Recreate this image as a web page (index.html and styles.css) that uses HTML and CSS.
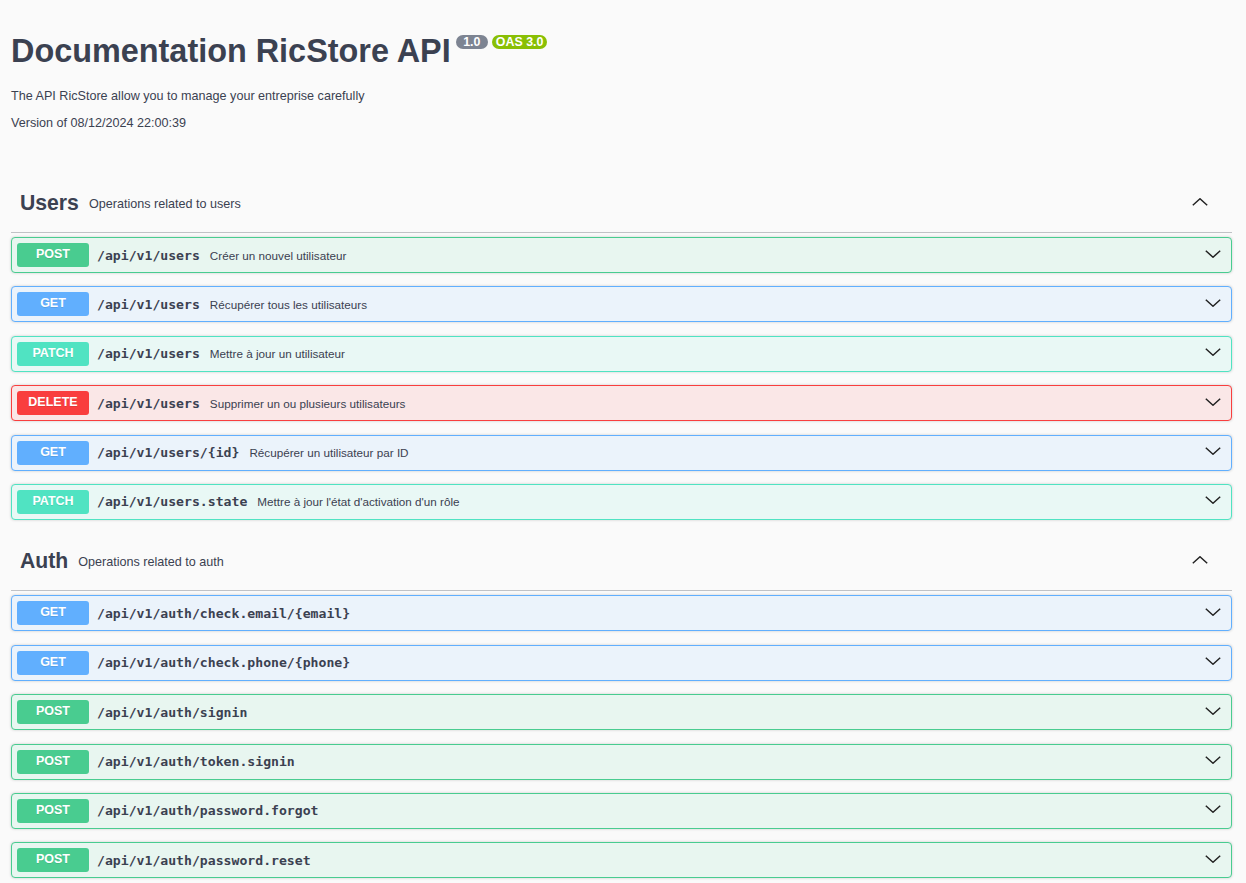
FILE: index.html
```html
<!DOCTYPE html>
<html lang="en">
<head>
<meta charset="utf-8">
<title>Documentation RicStore API</title>
<link rel="stylesheet" href="styles.css">
</head>
<body>
<div class="wrapper">
  <div class="info">
    <h2 class="title">Documentation RicStore API<span class="badge badge-ver"> 1.0 </span><span class="badge badge-oas">OAS 3.0</span></h2>
    <p class="info-text first">The API RicStore allow you to manage your entreprise carefully</p>
    <p class="info-text">Version of 08/12/2024 22:00:39</p>
  </div>

  <section class="tag-section">
    <div class="tag-header">
      <h3 class="tag-name">Users</h3>
      <span class="tag-desc">Operations related to users</span>
      <svg class="chev-up" width="16" height="8" viewBox="0 0 16 8"><polyline points="0.8,7.2 8,0.8 15.2,7.2" fill="none" stroke="#222" stroke-width="1.5"/></svg>
    </div>
    <div class="op op-post"><span class="method">POST</span><span class="path">/api/v1/users</span><span class="desc">Créer un nouvel utilisateur</span><svg class="chev" width="16" height="8" viewBox="0 0 16 8"><polyline points="0.8,0.8 8,7.2 15.2,0.8" fill="none" stroke="#222" stroke-width="1.5"/></svg></div>
    <div class="op op-get"><span class="method">GET</span><span class="path">/api/v1/users</span><span class="desc">Récupérer tous les utilisateurs</span><svg class="chev" width="16" height="8" viewBox="0 0 16 8"><polyline points="0.8,0.8 8,7.2 15.2,0.8" fill="none" stroke="#222" stroke-width="1.5"/></svg></div>
    <div class="op op-patch"><span class="method">PATCH</span><span class="path">/api/v1/users</span><span class="desc">Mettre à jour un utilisateur</span><svg class="chev" width="16" height="8" viewBox="0 0 16 8"><polyline points="0.8,0.8 8,7.2 15.2,0.8" fill="none" stroke="#222" stroke-width="1.5"/></svg></div>
    <div class="op op-delete"><span class="method">DELETE</span><span class="path">/api/v1/users</span><span class="desc">Supprimer un ou plusieurs utilisateurs</span><svg class="chev" width="16" height="8" viewBox="0 0 16 8"><polyline points="0.8,0.8 8,7.2 15.2,0.8" fill="none" stroke="#222" stroke-width="1.5"/></svg></div>
    <div class="op op-get"><span class="method">GET</span><span class="path">/api/v1/users/{id}</span><span class="desc">Récupérer un utilisateur par ID</span><svg class="chev" width="16" height="8" viewBox="0 0 16 8"><polyline points="0.8,0.8 8,7.2 15.2,0.8" fill="none" stroke="#222" stroke-width="1.5"/></svg></div>
    <div class="op op-patch"><span class="method">PATCH</span><span class="path">/api/v1/users.state</span><span class="desc">Mettre à jour l'état d'activation d'un rôle</span><svg class="chev" width="16" height="8" viewBox="0 0 16 8"><polyline points="0.8,0.8 8,7.2 15.2,0.8" fill="none" stroke="#222" stroke-width="1.5"/></svg></div>
  </section>

  <section class="tag-section">
    <div class="tag-header">
      <h3 class="tag-name">Auth</h3>
      <span class="tag-desc">Operations related to auth</span>
      <svg class="chev-up" width="16" height="8" viewBox="0 0 16 8"><polyline points="0.8,7.2 8,0.8 15.2,7.2" fill="none" stroke="#222" stroke-width="1.5"/></svg>
    </div>
    <div class="op op-get"><span class="method">GET</span><span class="path">/api/v1/auth/check.email/{email}</span><span class="desc"></span><svg class="chev" width="16" height="8" viewBox="0 0 16 8"><polyline points="0.8,0.8 8,7.2 15.2,0.8" fill="none" stroke="#222" stroke-width="1.5"/></svg></div>
    <div class="op op-get"><span class="method">GET</span><span class="path">/api/v1/auth/check.phone/{phone}</span><span class="desc"></span><svg class="chev" width="16" height="8" viewBox="0 0 16 8"><polyline points="0.8,0.8 8,7.2 15.2,0.8" fill="none" stroke="#222" stroke-width="1.5"/></svg></div>
    <div class="op op-post"><span class="method">POST</span><span class="path">/api/v1/auth/signin</span><span class="desc"></span><svg class="chev" width="16" height="8" viewBox="0 0 16 8"><polyline points="0.8,0.8 8,7.2 15.2,0.8" fill="none" stroke="#222" stroke-width="1.5"/></svg></div>
    <div class="op op-post"><span class="method">POST</span><span class="path">/api/v1/auth/token.signin</span><span class="desc"></span><svg class="chev" width="16" height="8" viewBox="0 0 16 8"><polyline points="0.8,0.8 8,7.2 15.2,0.8" fill="none" stroke="#222" stroke-width="1.5"/></svg></div>
    <div class="op op-post"><span class="method">POST</span><span class="path">/api/v1/auth/password.forgot</span><span class="desc"></span><svg class="chev" width="16" height="8" viewBox="0 0 16 8"><polyline points="0.8,0.8 8,7.2 15.2,0.8" fill="none" stroke="#222" stroke-width="1.5"/></svg></div>
    <div class="op op-post"><span class="method">POST</span><span class="path">/api/v1/auth/password.reset</span><span class="desc"></span><svg class="chev" width="16" height="8" viewBox="0 0 16 8"><polyline points="0.8,0.8 8,7.2 15.2,0.8" fill="none" stroke="#222" stroke-width="1.5"/></svg></div>
  </section>
</div>
</body>
</html>
```

FILE: styles.css
```css
* { box-sizing: border-box; }

html, body {
  margin: 0;
  padding: 0;
  background: #fafafa;
}

body {
  font-family: "Liberation Sans", Arial, sans-serif;
  color: #3b4151;
}

.wrapper {
  padding: 0 14px 0 11px;
}

.info {
  padding-top: 33px;
  padding-bottom: 44px;
}

.title {
  display: flex;
  align-items: flex-start;
  margin: 0;
  font-size: 32.4px;
  line-height: 36px;
  font-weight: 700;
  color: #3b4151;
}

.badge {
  display: inline-block;
  margin-top: 2px;
  height: 14px;
  padding: 0 4px;
  border-radius: 57px;
  font-size: 12.4px;
  line-height: 14px;
  font-weight: 700;
  color: #fff;
  white-space: pre;
}

.badge-ver {
  margin-left: 5px;
  background: #7d8492;
}

.badge-oas {
  margin-left: 4px;
  background: #89bf04;
}

.info-text {
  margin: 12px 0 0;
  font-size: 12.6px;
  line-height: 15px;
}

.info-text.first {
  margin-top: 20px;
}

.tag-header {
  display: flex;
  align-items: center;
  height: 58px;
  padding: 0 24px 0 9px;
  border-bottom: 1px solid rgba(59, 65, 81, 0.3);
  margin-bottom: 4px;
}

.tag-name {
  margin: 0 0 1px;
  font-size: 21.2px;
  font-weight: 700;
  line-height: 26px;
}

.tag-desc {
  flex: 1;
  margin-left: 10px;
  font-size: 12.6px;
}

.chev-up {
  display: block;
  margin-top: -4px;
}

.op {
  display: flex;
  align-items: center;
  height: 36px;
  padding: 0 5px;
  margin-bottom: 13.4px;
  border: 1px solid;
  border-radius: 4px;
  box-shadow: 0 0 3px rgba(0, 0, 0, 0.19);
}

.method {
  flex: none;
  width: 72px;
  height: 24px;
  border-radius: 3px;
  font-size: 12.5px;
  line-height: 22px;
  font-weight: 700;
  color: #fff;
  text-align: center;
  text-shadow: 0 1px 0 rgba(0, 0, 0, 0.1);
}

.path {
  flex: none;
  padding: 0 10px 0 8px;
  font-family: "DejaVu Sans Mono", monospace;
  font-size: 13.15px;
  font-weight: 700;
  color: #3b4151;
}

.desc {
  flex: 1;
  font-size: 11.7px;
  color: #3b4151;
}

.chev {
  display: block;
  flex: none;
  margin-right: 5px;
  margin-top: -3px;
}

.op-post { background: #e8f6f0; border-color: #49cc90; }
.op-post .method { background: #49cc90; }

.op-get { background: #ebf3fb; border-color: #61affe; }
.op-get .method { background: #61affe; }

.op-patch { background: #e9f8f5; border-color: #50e3c2; }
.op-patch .method { background: #50e3c2; }

.op-delete { background: #fae7e7; border-color: #f93e3e; }
.op-delete .method { background: #f93e3e; }
```
